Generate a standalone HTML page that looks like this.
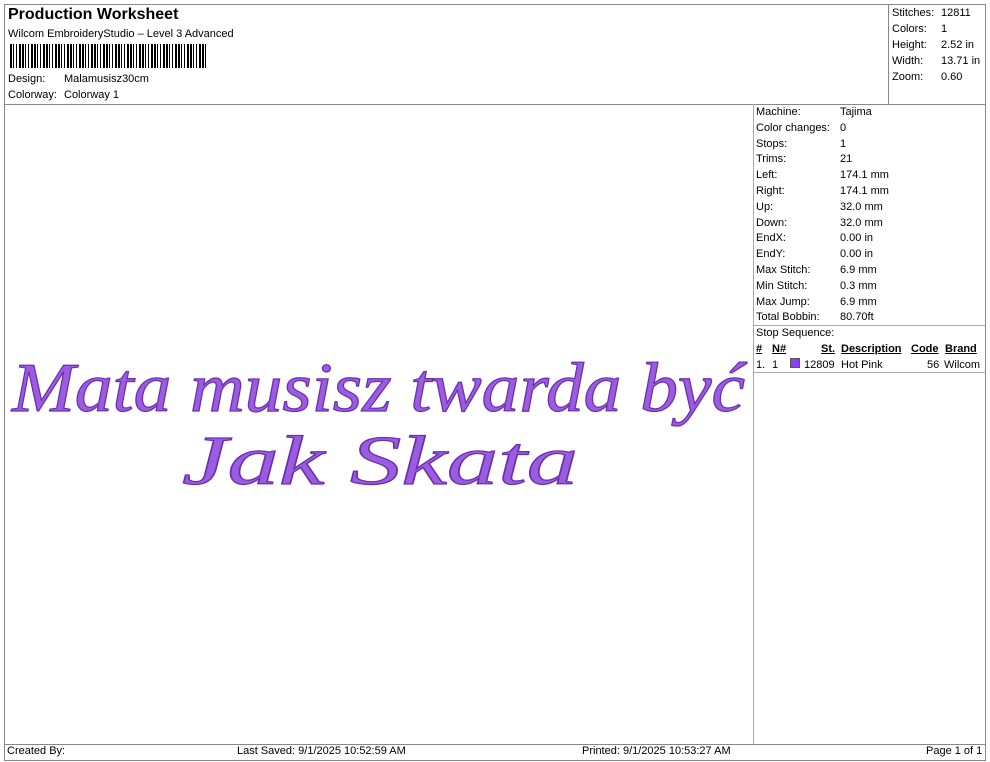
<!DOCTYPE html>
<html><head><meta charset="utf-8"><style>
*{margin:0;padding:0;box-sizing:border-box}
body{width:990px;height:762px;background:#fff;font-family:"Liberation Sans",sans-serif;color:#000;position:relative;overflow:hidden;font-size:11px}
.a{position:absolute;white-space:nowrap}
.ln{position:absolute;background:#888}
</style></head><body>
<div class="ln" style="left:4px;top:4px;width:982px;height:1px"></div>
<div class="ln" style="left:4px;top:4px;width:1px;height:756px"></div>
<div class="ln" style="left:985px;top:4px;width:1px;height:756px"></div>
<div class="ln" style="left:4px;top:104px;width:982px;height:1px"></div>
<div class="ln" style="left:888px;top:4px;width:1px;height:100px"></div>
<div class="ln" style="left:753px;top:104px;width:1px;height:640px;background:#aaa"></div>
<div class="ln" style="left:753px;top:325px;width:233px;height:1px;background:#aaa"></div>
<div class="ln" style="left:753px;top:372px;width:233px;height:1px;background:#aaa"></div>
<div class="ln" style="left:4px;top:744px;width:982px;height:1px"></div>
<div class="ln" style="left:4px;top:760px;width:982px;height:1px"></div>

<div class="a" style="left:8px;top:6px;font-size:16px;font-weight:bold">Production Worksheet</div>
<div class="a" style="left:8px;top:28px">Wilcom EmbroideryStudio – Level 3 Advanced</div>
<div class="a" style="left:10px;top:44px;width:198px;height:24px;background:repeating-linear-gradient(90deg,#000 0 2px,#fff 2px 3px,#000 3px 4px,#fff 4px 6px,#000 6px 7px,#fff 7px 9px,#000 9px 11px,#fff 11px 12px)"></div>
<div class="a" style="left:8px;top:73px">Design:</div><div class="a" style="left:64px;top:73px">Malamusisz30cm</div>
<div class="a" style="left:8px;top:89px">Colorway:</div><div class="a" style="left:64px;top:89px">Colorway 1</div>

<div class="a" style="left:892px;top:5px;line-height:16px">Stitches:<br>Colors:<br>Height:<br>Width:<br>Zoom:</div>
<div class="a" style="left:941px;top:5px;line-height:16px">12811<br>1<br>2.52 in<br>13.71 in<br>0.60</div>

<div class="a" style="left:756px;top:105px;line-height:15.8px">Machine:<br>Color changes:<br>Stops:<br>Trims:<br>Left:<br>Right:<br>Up:<br>Down:<br>EndX:<br>EndY:<br>Max Stitch:<br>Min Stitch:<br>Max Jump:<br>Total Bobbin:<br>Stop Sequence:</div>
<div class="a" style="left:840px;top:105px;line-height:15.8px">Tajima<br>0<br>1<br>21<br>174.1 mm<br>174.1 mm<br>32.0 mm<br>32.0 mm<br>0.00 in<br>0.00 in<br>6.9 mm<br>0.3 mm<br>6.9 mm<br>80.70ft</div>
<div class="a" style="left:756px;top:343px;font-weight:bold;text-decoration:underline">#</div>
<div class="a" style="left:772px;top:343px;font-weight:bold;text-decoration:underline">N#</div>
<div class="a" style="left:821px;top:343px;font-weight:bold;text-decoration:underline">St.</div>
<div class="a" style="left:841px;top:343px;font-weight:bold;text-decoration:underline">Description</div>
<div class="a" style="left:911px;top:343px;font-weight:bold;text-decoration:underline">Code</div>
<div class="a" style="left:945px;top:343px;font-weight:bold;text-decoration:underline">Brand</div>
<div class="a" style="left:756px;top:359px">1.</div><div class="a" style="left:772px;top:359px">1</div>
<div class="a" style="left:790px;top:358px;width:10px;height:10px;background:#8a3ff0;border:1px solid #555"></div>
<div class="a" style="left:804px;top:359px">12809</div><div class="a" style="left:841px;top:359px">Hot Pink</div>
<div class="a" style="left:927px;top:359px">56</div><div class="a" style="left:944px;top:359px">Wilcom</div>

<svg class="a" style="left:0;top:0" width="990" height="762">
<g font-family="Liberation Serif,serif" font-style="italic" fill="#9c5ce0" stroke="#6a2fb0" stroke-width="1.2">
<text x="12" y="411" font-size="70" textLength="733" lengthAdjust="spacingAndGlyphs">Mata musisz twarda być</text>
<text x="182" y="484" font-size="70" textLength="396" lengthAdjust="spacingAndGlyphs">Jak Skata</text>
</g></svg>

<div class="a" style="left:7px;top:745px;font-size:11px">Created By:</div>
<div class="a" style="left:237px;top:745px">Last Saved: 9/1/2025 10:52:59 AM</div>
<div class="a" style="left:582px;top:745px">Printed: 9/1/2025 10:53:27 AM</div>
<div class="a" style="left:926px;top:745px">Page 1 of 1</div>
</body></html>
